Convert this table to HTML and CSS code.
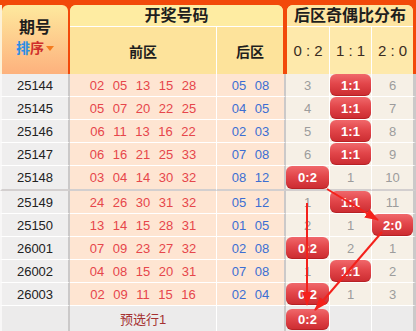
FILE: index.html
```html
<!DOCTYPE html>
<html lang="zh-CN">
<head>
<meta charset="utf-8">
<title>后区奇偶比分布</title>
<link rel="stylesheet" href="styles.css">
</head>
<body>
<div class="board">
  <div class="head">
    <div class="h-issue">
      <div class="h-issue-title">期号</div>
      <div class="h-sort"><span class="s-blue">排</span><span class="s-red">序</span><i class="tri"></i></div>
    </div>
    <div class="h-draw">
      <div class="h-title">开奖号码</div>
      <div class="h-sub draw-sub"><div class="hs hs-line">前区</div><div class="hs">后区</div></div>
    </div>
    <div class="h-ratio">
      <div class="h-title">后区奇偶比分布</div>
      <div class="h-sub ratio-sub"><div class="hr hs-line">0 : 2</div><div class="hr hs-line">1 : 1</div><div class="hr">2 : 0</div></div>
    </div>
  </div>

  <div class="rows">
    <div class="row"><div class="c issue">25144</div><div class="c front"><span>02</span><span>05</span><span>13</span><span>15</span><span>28</span></div><div class="c back"><span>05</span><span>08</span></div><div class="c t">3</div><div class="c t"><b class="badge">1:1</b></div><div class="c t last">6</div></div>
    <div class="row"><div class="c issue">25145</div><div class="c front"><span>05</span><span>07</span><span>20</span><span>22</span><span>25</span></div><div class="c back"><span>04</span><span>05</span></div><div class="c t">4</div><div class="c t"><b class="badge">1:1</b></div><div class="c t last">7</div></div>
    <div class="row"><div class="c issue">25146</div><div class="c front"><span>06</span><span>11</span><span>13</span><span>16</span><span>22</span></div><div class="c back"><span>02</span><span>03</span></div><div class="c t">5</div><div class="c t"><b class="badge">1:1</b></div><div class="c t last">8</div></div>
    <div class="row"><div class="c issue">25147</div><div class="c front"><span>06</span><span>16</span><span>21</span><span>25</span><span>33</span></div><div class="c back"><span>07</span><span>08</span></div><div class="c t">6</div><div class="c t"><b class="badge">1:1</b></div><div class="c t last">9</div></div>
    <div class="row group-end"><div class="c issue">25148</div><div class="c front"><span>03</span><span>04</span><span>14</span><span>30</span><span>32</span></div><div class="c back"><span>08</span><span>12</span></div><div class="c t"><b class="badge">0:2</b></div><div class="c t">1</div><div class="c t last">10</div></div>
    <div class="row"><div class="c issue">25149</div><div class="c front"><span>24</span><span>26</span><span>30</span><span>31</span><span>32</span></div><div class="c back"><span>05</span><span>12</span></div><div class="c t">1</div><div class="c t"><b class="badge">1:1</b></div><div class="c t last">11</div></div>
    <div class="row"><div class="c issue">25150</div><div class="c front"><span>13</span><span>14</span><span>15</span><span>28</span><span>31</span></div><div class="c back"><span>01</span><span>05</span></div><div class="c t">2</div><div class="c t">1</div><div class="c t last"><b class="badge">2:0</b></div></div>
    <div class="row"><div class="c issue">26001</div><div class="c front"><span>07</span><span>09</span><span>23</span><span>27</span><span>32</span></div><div class="c back"><span>02</span><span>08</span></div><div class="c t"><b class="badge">0:2</b></div><div class="c t">2</div><div class="c t last">1</div></div>
    <div class="row"><div class="c issue">26002</div><div class="c front"><span>04</span><span>08</span><span>15</span><span>20</span><span>31</span></div><div class="c back"><span>07</span><span>08</span></div><div class="c t">1</div><div class="c t"><b class="badge">1:1</b></div><div class="c t last">2</div></div>
    <div class="row"><div class="c issue">26003</div><div class="c front"><span>02</span><span>09</span><span>11</span><span>15</span><span>16</span></div><div class="c back"><span>02</span><span>04</span></div><div class="c t"><b class="badge">0:2</b></div><div class="c t">1</div><div class="c t last">3</div></div>
  </div>

  <div class="row foot"><div class="c issue"></div><div class="c front pick">预选行1</div><div class="c back"></div><div class="c t"><b class="badge">0:2</b></div><div class="c t"></div><div class="c t last"></div></div>

  <svg class="arrows" width="416" height="331" viewBox="0 0 416 331">
    <defs>
      <marker id="ah" viewBox="0 0 14 10" markerWidth="14" markerHeight="10" refX="13" refY="5" orient="auto" markerUnits="userSpaceOnUse">
        <path d="M0 0L14 5L0 10z" fill="#f4211b"/>
      </marker>
    </defs>
    <line x1="327" y1="189" x2="378" y2="220" class="arr" marker-end="url(#ah)"/>
    <line x1="382" y1="232" x2="315" y2="310" class="arr" marker-end="url(#ah)"/>
    <line x1="307" y1="203" x2="307" y2="305" class="arr" marker-end="url(#ah)"/>
  </svg>
</div>
</body>
</html>
```
FILE: styles.css
```css
html, body {
  margin: 0;
  padding: 0;
  background: #ffffff;
}

.board {
  position: relative;
  width: 416px;
  height: 331px;
  overflow: hidden;
  font-family: "Liberation Sans", "Noto Sans CJK SC", sans-serif;
  font-size: 13px;
}

/* ---------- header ---------- */
.head {
  display: flex;
  box-sizing: border-box;
  height: 74px;
  padding: 5px 3px 0 2px;
  background:
    linear-gradient(to right, #fdf1d6 0 2px, transparent 2px) 0 5px / 100% 100% no-repeat,
    #f2490a;
}

.h-issue {
  width: 66px;
  margin-right: 2px;
  border-radius: 6px 6px 0 0;
  background: linear-gradient(#fee99e, #fdb17d);
  display: flex;
  flex-direction: column;
  align-items: center;
  justify-content: center;
  padding-bottom: 3px;
  box-sizing: border-box;
}

.h-issue-title {
  font-size: 16px;
  font-weight: bold;
  color: #1e1e1e;
  line-height: 20px;
}

.h-sort {
  display: flex;
  align-items: center;
  font-size: 14px;
  font-weight: bold;
  line-height: 20px;
}

.s-blue { color: #2b8ee6; }
.s-red { color: #cf2f2c; }

.tri {
  width: 0;
  height: 0;
  margin-left: 2px;
  border-left: 4px solid transparent;
  border-right: 4px solid transparent;
  border-top: 5px solid #f47a1e;
}

.h-draw {
  width: 213px;
  margin-right: 4px;
  border-radius: 6px 6px 0 0;
  overflow: hidden;
  background: #fde39b;
}

.h-ratio {
  width: 126px;
  border-radius: 6px 6px 0 0;
  overflow: hidden;
  background: #fee9ab;
}

.h-title {
  height: 21px;
  line-height: 21px;
  border-bottom: 1px solid #ffffff;
  text-align: center;
  font-size: 16px;
  font-weight: bold;
  color: #1e1e1e;
}

.h-draw .h-title { background: #feeca2; }
.h-ratio .h-title { background: #fee5a1; }

.h-sub {
  display: grid;
  height: 47px;
}

.draw-sub { grid-template-columns: 147px 1fr; }
.ratio-sub { grid-template-columns: 43px 42px 41px; }

.hs, .hr {
  display: flex;
  align-items: center;
  justify-content: center;
  box-sizing: border-box;
}

.hs {
  font-size: 14px;
  font-weight: bold;
  color: #1e1e1e;
}

.hr {
  font-size: 15px;
  color: #3a2c22;
}

.hs-line { border-right: 1px solid #ffffff; }

/* ---------- body rows ---------- */
.row {
  display: grid;
  grid-template-columns: 70px 147px 69px 44px 42px 44px;
  height: 23px;
}

.row.group-end { height: 25px; }

.c {
  box-sizing: border-box;
  display: flex;
  align-items: center;
  justify-content: center;
  border-bottom: 1px solid #ffffff;
  white-space: nowrap;
}

.group-end .c { border-bottom: 2px solid #d3cfcf; }

.issue {
  background: #efeeee;
  border-left: 2px solid #f8f7f7;
  border-right: 2px solid #cbc9c9;
  color: #222222;
}

.front {
  background: #fee5d2;
  border-right: 1px solid #ffffff;
  gap: 8.5px;
  color: #e6464b;
}

.back {
  background: #fee5d2;
  border-right: 2px solid #cbc9c9;
  gap: 8.5px;
  color: #3c6ed2;
}

.t {
  background: #f6f0e6;
  border-right: 1px solid #ffffff;
  color: #9c9c9c;
}

.t.last { border-right: 3px solid #cbc9c9; }

.badge {
  display: flex;
  align-items: center;
  justify-content: center;
  width: 100%;
  height: 100%;
  box-sizing: border-box;
  border-radius: 6px;
  background: linear-gradient(#f0686b 0%, #e2464a 45%, #cb2b30 100%);
  box-shadow: inset 0 -1px 0 rgba(120, 0, 0, 0.25);
  color: #ffffff;
  font-size: 13px;
  font-weight: bold;
}

/* ---------- footer ---------- */
.foot { height: 25px; }

.foot .c {
  background: #ecebeb;
  border-bottom: none;
}

.foot .t { align-items: flex-start; padding-top: 3px; }
.foot .t .badge { height: 21px; }

.pick { color: #a53131; }

/* ---------- arrows overlay ---------- */
.arrows {
  position: absolute;
  left: 0;
  top: 0;
  pointer-events: none;
}

.arr {
  stroke: #f4211b;
  stroke-width: 2;
}
```
